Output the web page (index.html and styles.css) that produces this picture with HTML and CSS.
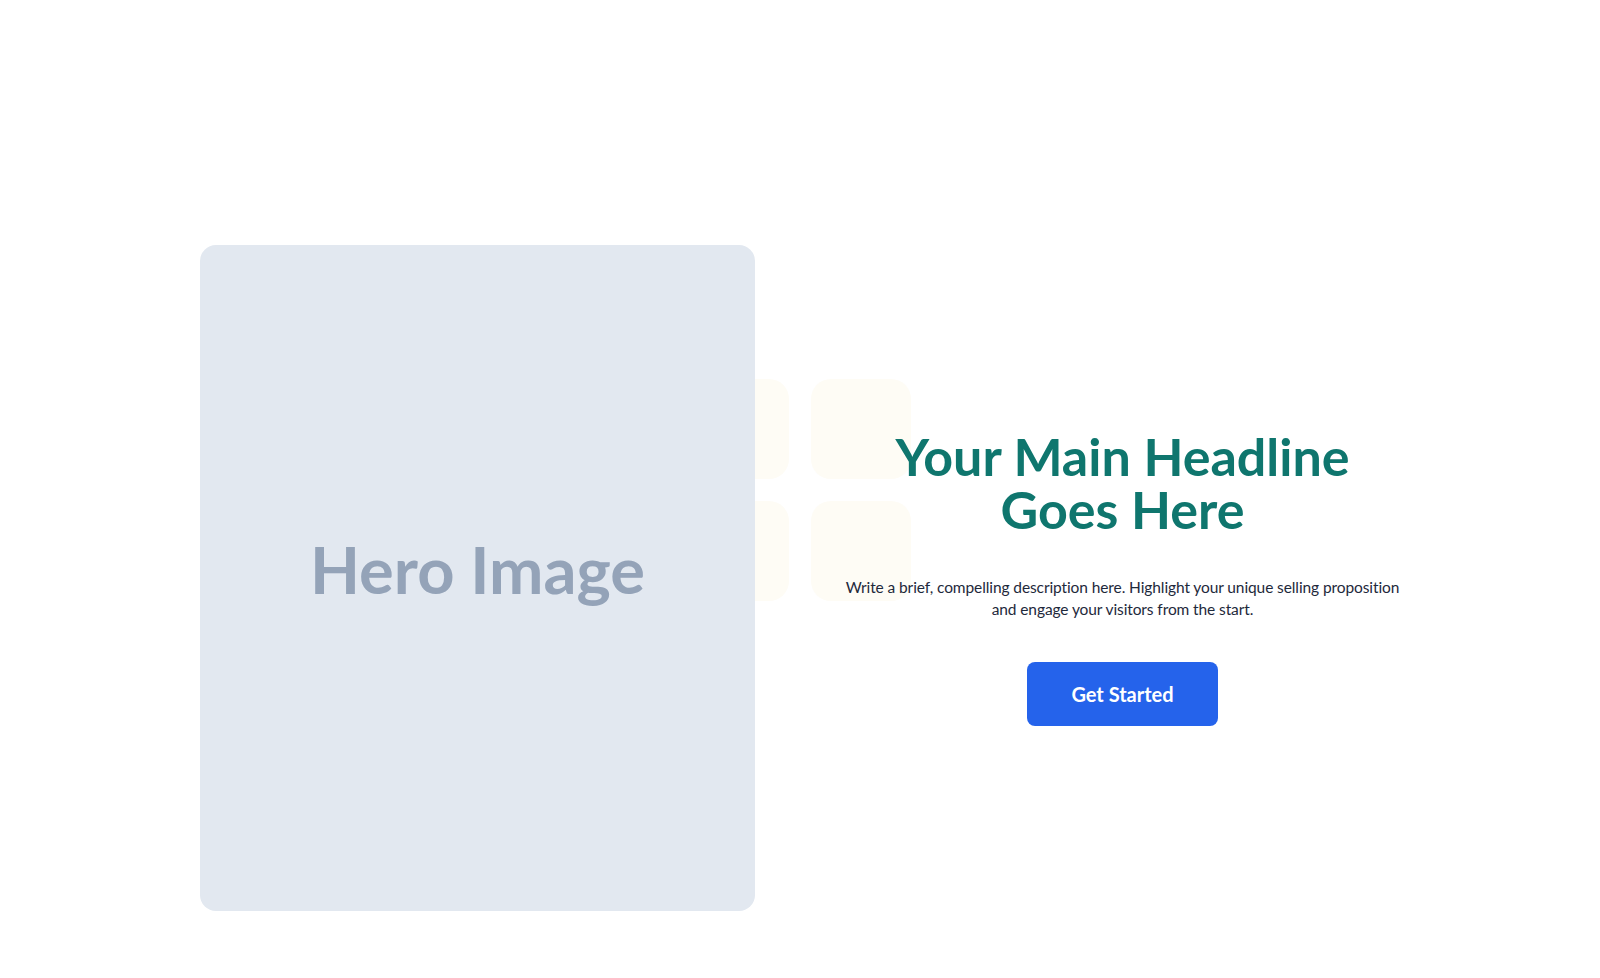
FILE: index.html
```html
<!DOCTYPE html>
<html lang="en">
<head>
    <meta charset="UTF-8">
    <meta name="viewport" content="width=device-width, initial-scale=1.0">
    <title>Hero</title>
    <link rel="stylesheet" href="styles.css">
</head>
<body>

    <section class="hero">
        <div class="deco">
            <span></span><span></span>
            <span></span><span></span>
        </div>

        <div class="hero-inner">
            <div class="hero-image">Hero Image</div>

            <div class="hero-content">
                <h1>Your Main Headline Goes Here</h1>
                <p>Write a brief, compelling description here. Highlight your unique selling proposition and engage your visitors from the start.</p>
                <a href="#" class="btn">Get Started</a>
            </div>
        </div>
    </section>

</body>
</html>
```

FILE: styles.css
```css
body {
    margin: 0;
    font-family: Lato, "Noto Sans", sans-serif;
    background: #ffffff;
    color: #1e293b;
}
.hero {
    position: relative;
    min-height: 978px;
    box-sizing: border-box;
    padding: 245px 0 68px;
}
/* faint squares in the middle of the page */
.deco {
    position: absolute;
    left: 50%;
    top: 50%;
    transform: translate(-50%, -50%);
    display: grid;
    grid-template-columns: 100px 100px;
    gap: 22px;
}
.deco span {
    width: 100px;
    height: 100px;
    border-radius: 20px;
    background: #fefcf5;
}
.hero-inner {
    position: relative;
    max-width: 1200px;
    margin: 0 auto;
    display: grid;
    grid-template-columns: 555px 555px;
    justify-content: space-between;
    align-items: center;
}
.hero-image {
    aspect-ratio: 5 / 6;
    box-sizing: border-box;
    padding-bottom: 18px;
    background: #e2e8f0;
    border-radius: 16px;
    display: flex;
    align-items: center;
    justify-content: center;
    color: #94a3b8;
    font-family: Lato, sans-serif;
    font-weight: 700;
    font-size: 65px;
}
.hero-content {
    text-align: center;
}
.hero-content h1 {
    margin: 0 0 40px;
    color: #0f766e;
    font-size: 52px;
    line-height: 53px;
    font-weight: 700;
}
.hero-content p {
    margin: 0 0 42px;
    font-size: 15.5px;
    letter-spacing: -0.1px;
    line-height: 22px;
    color: #1e293b;
}
.btn {
    display: inline-block;
    padding: 20px 44px;
    background: #2563eb;
    color: #ffffff;
    border-radius: 8px;
    font-size: 20px;
    line-height: 24px;
    font-weight: 700;
    text-decoration: none;
}
```
